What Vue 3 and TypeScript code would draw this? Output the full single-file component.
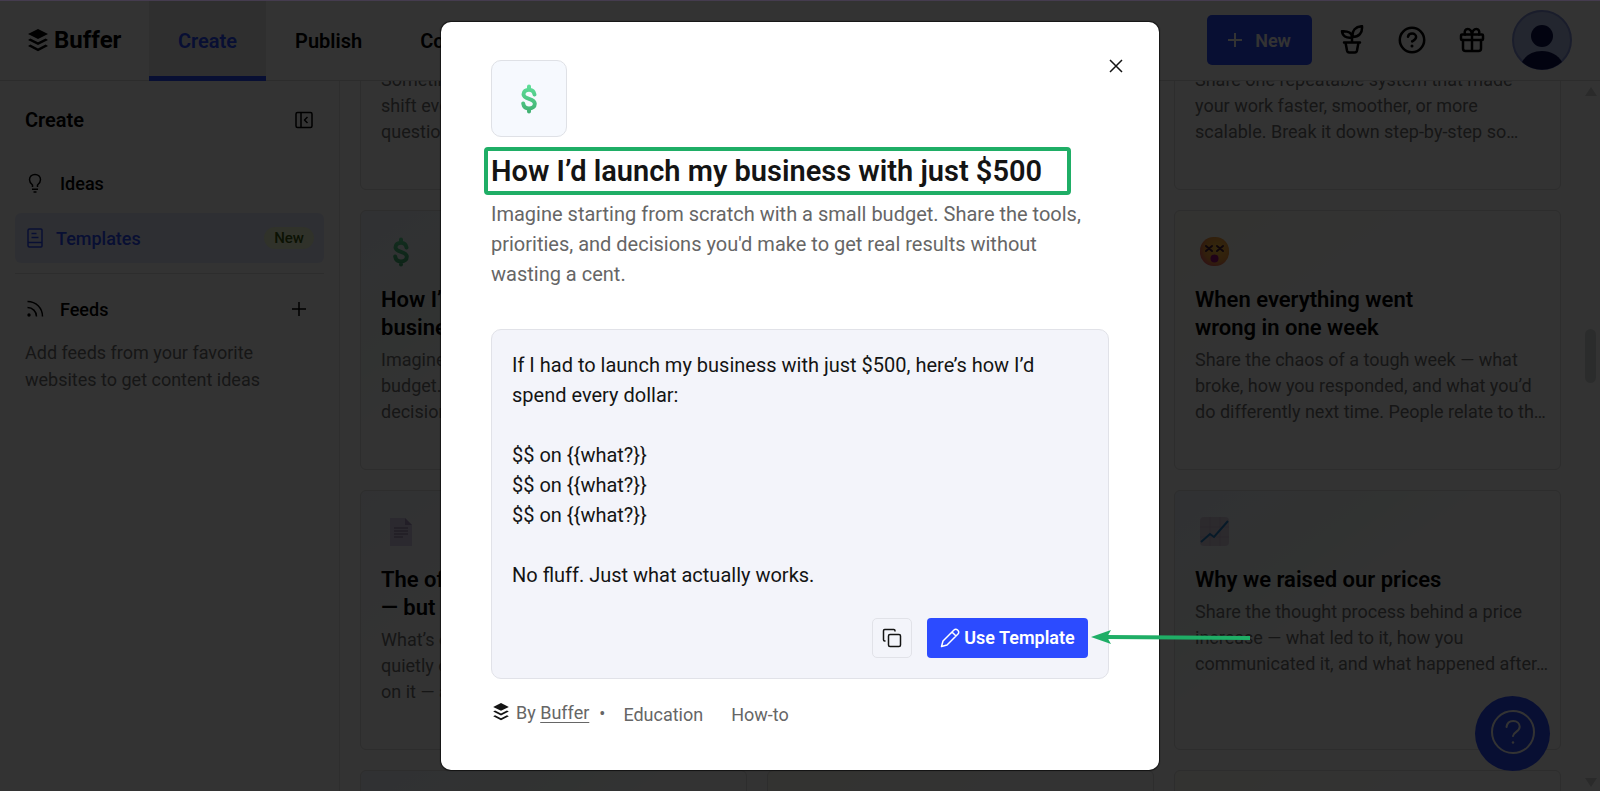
<script setup lang="ts">
import { ref } from 'vue'

interface Card {
  icon?: 'dollar' | 'dizzy' | 'page' | 'chart'
  title?: string
  text?: string
  tint: string
}

const tabs = ['Create', 'Publish', 'Community']
const activeTab = ref('Create')
const open = ref(true)

const cards: Card[] = [
  { text: 'Sometimes one question can\nshift everything. Share the\nquestion that changed it.', tint: 'plain' },
  { tint: 'plain' },
  { text: 'Share one repeatable system that made\nyour work faster, smoother, or more\nscalable. Break it down step-by-step so…', tint: 'plain' },
  {
    icon: 'dollar',
    title: 'How I’d launch my\nbusiness with just $500',
    text: 'Imagine starting from scratch with a small\nbudget. Share the tools, priorities, and\ndecisions you\'d make to get real results…',
    tint: 'mint',
  },
  { tint: 'plain' },
  {
    icon: 'dizzy',
    title: 'When everything went\nwrong in one week',
    text: 'Share the chaos of a tough week — what\nbroke, how you responded, and what you’d\ndo differently next time. People relate to th…',
    tint: 'cream',
  },
  { icon: 'page', title: 'The offer\n— but', text: 'What’s one\nquietly one\non it — and', tint: 'sky' },
  { tint: 'plain' },
  {
    icon: 'chart',
    title: 'Why we raised our prices',
    text: 'Share the thought process behind a price\nincrease — what led to it, how you\ncommunicated it, and what happened after…',
    tint: 'mint',
  },
  { tint: 'mint' },
  { tint: 'cream' },
  { tint: 'cream' },
]

const body = [
  'If I had to launch my business with just $500, here’s how I’d spend every dollar:',
  '',
  '$$ on {{what?}}',
  '$$ on {{what?}}',
  '$$ on {{what?}}',
  '',
  'No fluff. Just what actually works.',
].join('\n')

const tags = ['Education', 'How-to']
</script>

<template>
  <div class="app">
    <header class="topbar">
      <a class="brand" href="#">
        <svg width="20" height="23" viewBox="0 0 20 23" aria-hidden="true">
          <path d="M10 0 20 5 10 10 0 5Z" />
          <path d="M2.4 9.5 10 13.3l7.6-3.8L20 10.9l-10 5-10-5Z" />
          <path d="M2.4 15.6 10 19.4l7.6-3.8L20 17l-10 5.2L0 17Z" />
        </svg>
        <span>Buffer</span>
      </a>
      <nav class="tabs">
        <a v-for="t in tabs" :key="t" href="#" class="tab" :class="{ active: t === activeTab }" @click.prevent="activeTab = t">{{ t }}</a>
      </nav>
      <div class="tools">
        <button class="new" type="button">
          <svg width="14" height="14" viewBox="0 0 14 14" aria-hidden="true"><path d="M7 0v14M0 7h14" /></svg>
          New
        </button>
        <button class="tool" type="button" aria-label="Grow">
          <svg class="line" width="30" height="30" viewBox="0 0 30 30" aria-hidden="true">
            <path d="M7 17.500h16M8.500 17.500l1.500 8c.3 1.400 1 1.900 2.200 1.900h5.600c1.200 0 1.900-.5 2.200-1.900l1.500-8M15 17V12.500" />
            <path d="M15 12.500C15 8 11.500 5.800 5 6.200 5.500 11 9 13.300 15 12.500Z" />
            <path d="M15.500 12C14.800 5.500 18.500 1.500 25 1.200 25.600 8 22 12 15.500 12Z" />
          </svg>
        </button>
        <button class="tool" type="button" aria-label="Help">
          <svg class="line" width="30" height="30" viewBox="0 0 30 30" aria-hidden="true">
            <circle cx="15" cy="15" r="12.200" />
            <path d="M11 11.800c.4-2.100 2-3.200 4.100-3.200 2.300 0 4 1.500 4 3.500 0 2.500-2.300 3.200-4 4.300" />
            <circle class="dot" cx="15" cy="21" r="1.500" />
          </svg>
        </button>
        <button class="tool" type="button" aria-label="What's new">
          <svg class="line" width="30" height="30" viewBox="0 0 30 30" aria-hidden="true">
            <rect x="4" y="9.500" width="22" height="5.500" rx="1" />
            <path d="M6 15v8.500c0 1.500 1 2.500 2.500 2.500h13c1.500 0 2.500-1 2.500-2.500V15M15 9.500V26" />
            <path d="M15 9.500C14.500 6 13 4 10.800 4 8.500 4 7 6 8 9.500M15 9.500C15.500 6 17 4 19.200 4 21.500 4 23 6 22 9.500" />
          </svg>
        </button>
        <button class="avatar" type="button" aria-label="Account">
          <svg width="60" height="60" viewBox="0 0 60 60" aria-hidden="true">
            <circle cx="30" cy="30" r="29" fill="#b0bde8" stroke="#8090d8" stroke-width="2" />
            <circle cx="30" cy="26" r="11" fill="#0a1050" />
            <path d="M10 52C14 45 21 41 30 41s16 4 20 11a30 30 0 0 1-40 0Z" fill="#0a1050" />
          </svg>
        </button>
      </div>
    </header>

    <div class="page">
      <aside class="sidebar">
        <div class="side-head">
          <h1>Create</h1>
          <button class="plain" type="button" aria-label="Collapse sidebar">
            <svg class="thin" width="18" height="18" viewBox="0 0 18 18" aria-hidden="true">
              <rect x="1" y="1.500" width="16" height="15" rx="1.500" />
              <path d="M6 1.500v15M12.500 6l-3 3 3 3" />
            </svg>
          </button>
        </div>
        <a class="item" href="#">
          <svg class="thin" width="20" height="20" viewBox="0 0 20 20" aria-hidden="true">
            <path d="M7.500 14v-2C5.500 10.500 4.500 9 4.500 6.800 4.500 3.500 7 1.500 10 1.500s5.500 2 5.500 5.300c0 2.200-1 3.700-3 5.200v2M7 16.300h6M8.500 19h3" />
          </svg>
          <span>Ideas</span>
        </a>
        <a class="item current" href="#">
          <svg class="thin" width="20" height="20" viewBox="0 0 20 20" aria-hidden="true">
            <path d="M4.500 1H16c.7 0 1 .3 1 1v16c0 .7-.3 1-1 1H4.500C3.500 19 3 18.500 3 17.500v-15C3 1.500 3.500 1 4.500 1ZM3 14.500h14M6.500 5.500h5M6.500 9.500h7" />
          </svg>
          <span>Templates</span>
          <em>New</em>
        </a>
        <div class="item feeds">
          <svg class="thin" width="20" height="20" viewBox="0 0 20 20" aria-hidden="true">
            <path d="M2.500 2.500c8.500 0 15 6.500 15 15M2.500 8.500c5 0 9 4 9 9" />
            <circle class="dot" cx="4" cy="16" r="1.700" />
          </svg>
          <span>Feeds</span>
          <button class="plain" type="button" aria-label="Add feed">
            <svg class="thin" width="14" height="14" viewBox="0 0 14 14" aria-hidden="true"><path d="M7 0v14M0 7h14" /></svg>
          </button>
        </div>
        <p>Add feeds from your favorite websites to get content ideas</p>
      </aside>

      <main class="board">
        <div class="grid">
          <article v-for="(c, i) in cards" :key="i" class="card" :class="[c.tint, { tail: !c.title }]">
            <svg v-if="c.icon === 'dollar'" class="dollar" width="30" height="30" viewBox="0 0 30 30" aria-hidden="true">
              <path d="M15 2.500v3M15 24.500v3M20.500 10.500C20 7.200 18 5.700 15 5.700s-5.500 1.700-5.500 4.500c0 6 11.300 3.300 11.300 9.600 0 3-2.600 4.700-5.800 4.700s-5.300-1.700-5.800-5" />
            </svg>
            <svg v-else-if="c.icon === 'dizzy'" width="30" height="30" viewBox="0 0 30 30" aria-hidden="true">
              <defs>
                <radialGradient id="face" cx=".6" cy=".4" r=".7">
                  <stop offset="0" stop-color="#ffc83d" /><stop offset=".65" stop-color="#f59a3c" /><stop offset="1" stop-color="#e8506a" />
                </radialGradient>
              </defs>
              <rect x="0" y="0" width="29" height="29" rx="13.500" fill="url(#face)" />
              <path d="m6 9 6 5m0-5-6 5M17 9l6 5m0-5-6 5" stroke="#482038" stroke-width="2" stroke-linecap="round" />
              <circle cx="14.500" cy="21.500" r="4" fill="#a0107a" />
            </svg>
            <svg v-else-if="c.icon === 'page'" width="30" height="30" viewBox="-4 0 30 30" aria-hidden="true">
              <path d="M0 1h15l7 7v21H0Z" fill="#d8cce8" />
              <path d="M15 1v7h7Z" fill="#a898c0" />
              <path d="M4 11h14M4 14h14M4 17h14M4 20h9" stroke="#85779c" stroke-width="1" />
            </svg>
            <svg v-else-if="c.icon === 'chart'" width="30" height="30" viewBox="0 0 30 30" aria-hidden="true">
              <rect width="29" height="29" rx="4" fill="#dccfe2" />
              <path d="M10 0v29M20 0v29M0 10h29M0 20h29" stroke="#cdbfd4" stroke-width="1" />
              <path d="m1 25 9-8 4 3L28 4" fill="none" stroke="#2480c8" stroke-width="2" />
            </svg>
            <h3 v-if="c.title">{{ c.title }}</h3>
            <p v-if="c.text">{{ c.text }}</p>
          </article>
        </div>
      </main>
      <div class="scroll" aria-hidden="true"><i class="up"></i><i class="thumb"></i><i class="down"></i></div>
    </div>

    <button class="fab" type="button" aria-label="Open help">
      <svg width="48" height="48" viewBox="0 0 48 48" aria-hidden="true">
        <circle cx="24" cy="22" r="21" />
        <path d="M17.500 17c.5-3.800 3-6 6.700-6 3.800 0 6.500 2.400 6.500 5.800 0 5-6.200 5-6.700 9.200" />
        <circle class="dot" cx="24" cy="32.500" r="1.200" />
      </svg>
    </button>

    <div v-if="open" class="overlay">
      <section class="modal" role="dialog" aria-modal="true" aria-labelledby="dialog-title">
        <button class="close" type="button" aria-label="Close" @click="open = false">
          <svg width="12" height="12" viewBox="0 0 12 12" aria-hidden="true"><path d="m0 0 12 12M12 0 0 12" /></svg>
        </button>
        <div class="badge">
          <svg class="dollar" width="30" height="30" viewBox="0 0 30 30" aria-hidden="true">
            <defs>
              <linearGradient id="green" x1="0" y1="0" x2="0" y2="30" gradientUnits="userSpaceOnUse">
                <stop offset="0" stop-color="#5fe09a" /><stop offset="1" stop-color="#3fae70" />
              </linearGradient>
            </defs>
            <path d="M15 2.500v3M15 24.500v3M20.500 10.500C20 7.200 18 5.700 15 5.700s-5.500 1.700-5.500 4.500c0 6 11.300 3.300 11.300 9.600 0 3-2.600 4.700-5.800 4.700s-5.300-1.700-5.800-5" />
          </svg>
        </div>
        <h2 id="dialog-title">How I’d launch my business with just $500</h2>
        <p class="lead">Imagine starting from scratch with a small budget. Share the tools, priorities, and decisions you'd make to get real results without wasting a cent.</p>
        <div class="sample">
          <p>{{ body }}</p>
          <div class="actions">
            <button class="copy" type="button" aria-label="Copy">
              <svg width="20" height="20" viewBox="0 0 20 20" aria-hidden="true">
                <rect x="6.500" y="6.500" width="12" height="12" rx="1.500" />
                <path d="M3.500 13H2.700c-.8 0-1.200-.4-1.200-1.200V2.700c0-.8.4-1.200 1.200-1.200h9.100c.8 0 1.200.4 1.200 1.200v.8" />
              </svg>
            </button>
            <button class="use" type="button">
              <svg width="20" height="20" viewBox="0 0 20 20" aria-hidden="true">
                <path d="M1.500 18.500 3 13 14 2c1-1 2.500-1 3.500 0l.5.500c1 1 1 2.500 0 3.500L7 17ZM12 4l4 4" />
              </svg>
              Use Template
            </button>
            <svg class="arrow" width="160" height="16" viewBox="0 0 160 16" aria-hidden="true">
              <path d="M16 7 159 8" stroke="#1fae66" stroke-width="4" />
              <path d="M0 7 20 0 16 7l4 7Z" fill="#1fae66" />
            </svg>
          </div>
        </div>
        <footer>
          <svg width="16" height="18" viewBox="0 0 20 23" aria-hidden="true">
            <path d="M10 0 20 5 10 10 0 5Z" />
            <path d="M2.400 9.500 10 13.300l7.600-3.800L20 10.900l-10 5-10-5Z" />
            <path d="M2.400 15.600 10 19.400l7.600-3.800L20 17l-10 5.200L0 17Z" />
          </svg>
          <span>By <a href="#">Buffer</a></span>
          <b>•</b>
          <ul><li v-for="t in tags" :key="t">{{ t }}</li></ul>
        </footer>
      </section>
    </div>
  </div>
</template>

<style>
body { margin: 0; overflow: hidden; }
</style>

<style scoped>
* { box-sizing: border-box; }
.app { position: relative; display: flex; flex-direction: column; height: 100vh; overflow: hidden; background: #fff; color: #000; font-family: Roboto, "Liberation Sans", sans-serif; font-size: 18px; }
h1, h2, h3, p, ul { margin: 0; padding: 0; }
a { color: inherit; text-decoration: none; }
button { padding: 0; border: 0; background: none; color: inherit; font: inherit; cursor: pointer; }
svg { display: block; flex: none; }

.topbar { display: flex; flex: none; height: 81px; border-bottom: 1px solid #dcdcdc; }
.brand { display: flex; align-items: center; gap: 6px; width: 149px; padding-left: 28px; font-size: 24px; font-weight: 700; }
.tabs { display: flex; margin-bottom: -1px; }
.tab { display: flex; align-items: center; padding: 6px 29px 0; border-bottom: 5px solid transparent; font-size: 20px; font-weight: 600; }
.tab.active { background: #ebebeb; border-color: #2c4bff; color: #2c4bff; }
.tools { display: flex; align-items: center; gap: 25px; margin-left: auto; padding-right: 28px; }
.tool + .tool { margin-left: 5px; }
.new { display: flex; align-items: center; justify-content: center; gap: 13px; width: 105px; height: 50px; border-radius: 5px; background: #2c4bff; color: #fff; font-weight: 600; }
.new svg { stroke: #fff; stroke-width: 2; }
.line { fill: none; stroke: #000; stroke-width: 2.500; stroke-linecap: round; stroke-linejoin: round; }
.thin { fill: none; stroke: currentColor; stroke-width: 1.500; stroke-linejoin: round; }
.dot { fill: currentColor; stroke: none; }

.page { display: flex; flex: 1; min-height: 0; }
.sidebar { width: 340px; flex: none; padding: 0 15px; border-right: 1px solid #e4e4e4; }
.side-head { display: flex; align-items: center; justify-content: space-between; height: 77px; padding: 0 11px 0 10px; }
.side-head h1 { font-size: 20px; font-weight: 600; }
.item { display: flex; align-items: center; gap: 15px; height: 50px; padding: 0 10px; font-weight: 500; }
.current { gap: 11px; margin-top: 5px; border-radius: 6px; background: #e6ebff; color: #2c4bff; }
.current em { margin-left: auto; padding: 0 10px; border-radius: 12px; background: #edf7cf; color: #3c5a12; font-size: 15px; font-style: normal; line-height: 22px; }
.feeds { height: 91px; margin-top: 10px; padding-right: 18px; padding-bottom: 20px; border-top: 1px solid #e0e0e0; }
.feeds button { margin-left: auto; }
.sidebar p { margin-top: -25px; padding: 0 40px 0 10px; color: #707070; line-height: 27px; }

.board { flex: 1; min-width: 0; overflow: hidden; padding: 0 4px 0 20px; }
.grid { display: grid; grid-template-columns: repeat(3, 1fr); grid-auto-rows: 260px; gap: 20px; margin-top: -151px; }
.card { padding: 26px 20px; border: 1px solid #dedede; border-radius: 6px; white-space: pre; overflow: hidden; }
.card > svg { margin-left: 5px; }
.card h3 { margin-top: 19px; font-size: 22px; font-weight: 600; line-height: 28px; }
.card p { margin-top: 5px; color: #707070; line-height: 26px; }
.tail { display: flex; align-items: flex-end; padding-bottom: 44px; }
.mint { background: linear-gradient(145deg, #f0f4ff, #f4fcf9 28%, #fff 45%); }
.cream { background: linear-gradient(145deg, #fffdf2, #fff 40%); }
.sky { background: linear-gradient(145deg, #f3f6ff, #fff 40%); }
.dollar { fill: none; stroke: url(#green); stroke-width: 4; stroke-linecap: round; stroke-linejoin: round; }

.scroll { display: flex; flex-direction: column; align-items: center; width: 15px; flex: none; margin-right: 2px; margin-left: 18px; padding: 6px 0 4px; }
.scroll i { display: block; }
.up { border: 6px solid transparent; border-top: 0; border-bottom: 9px solid #cfd3d3; }
.down { margin-top: auto; border: 6px solid transparent; border-bottom: 0; border-top: 9px solid #cfd3d3; }
.thumb { width: 11px; height: 54px; margin-top: 233px; border-radius: 6px; background: #d8dcdc; }

.fab { position: absolute; right: 50px; bottom: 20px; display: grid; place-items: center; width: 75px; height: 75px; border-radius: 50%; background: #2c4bff; color: #fff; }
.fab svg { fill: none; stroke: #fff; stroke-width: 2; stroke-linecap: round; }

.overlay { position: absolute; inset: 0; display: grid; place-items: center; border-top: 1px solid #453c4f; background: rgba(0, 0, 0, 0.8); }
.modal { position: relative; width: 718px; max-width: 100%; padding: 38px 50px 44px; border-radius: 10px; background: #fff; color: #141414; box-shadow: 0 0 1px 1px rgba(0, 0, 0, 0.6); }
.close { position: absolute; top: 28px; right: 27px; display: grid; place-items: center; width: 32px; height: 32px; }
.close svg { overflow: visible; stroke: #141414; stroke-width: 1.500; }
.badge { display: grid; place-items: center; width: 76px; height: 77px; border: 1px solid #dfe1e6; border-radius: 10px; background: #f6f9fe; }
.modal h2 { width: 587px; margin: 10px 0 0 -7px; padding-left: 3px; border: 4px solid #1fae66; border-radius: 4px; font-size: 29px; font-weight: 600; line-height: 40px; white-space: nowrap; }
.lead { margin-top: 4px; color: #666; font-size: 20px; line-height: 30px; }
.sample { margin-top: 40px; padding: 20px; border: 1px solid #e1e2e8; border-radius: 10px; background: #f3f4fa; font-size: 20px; line-height: 30px; }
.sample p { white-space: pre-wrap; }
.actions { position: relative; display: flex; justify-content: flex-end; gap: 15px; margin-top: 28px; }
.copy { display: grid; place-items: center; width: 40px; height: 40px; border: 1px solid #e1e2e8; border-radius: 5px; }
.copy svg { fill: none; stroke: #141414; stroke-width: 1.500; }
.use { display: flex; align-items: center; justify-content: center; gap: 4px; width: 161px; height: 40px; border-radius: 4px; background: #2c4bff; color: #fff; font-size: 18px; font-weight: 600; }
.use svg { fill: none; stroke: #fff; stroke-width: 1.500; stroke-linejoin: round; }
.arrow { position: absolute; left: 100%; top: 12px; margin-left: 3px; }
footer { display: flex; align-items: center; height: 28px; margin-top: 19px; padding-left: 2px; color: #666; }
footer svg { margin-right: 7px; fill: #141414; }
footer a { text-decoration: underline; text-underline-offset: 3px; }
footer b { margin: 3px 18px 0 10px; font-weight: 400; }
footer ul { display: flex; gap: 28px; padding-top: 5px; list-style: none; }
</style>
